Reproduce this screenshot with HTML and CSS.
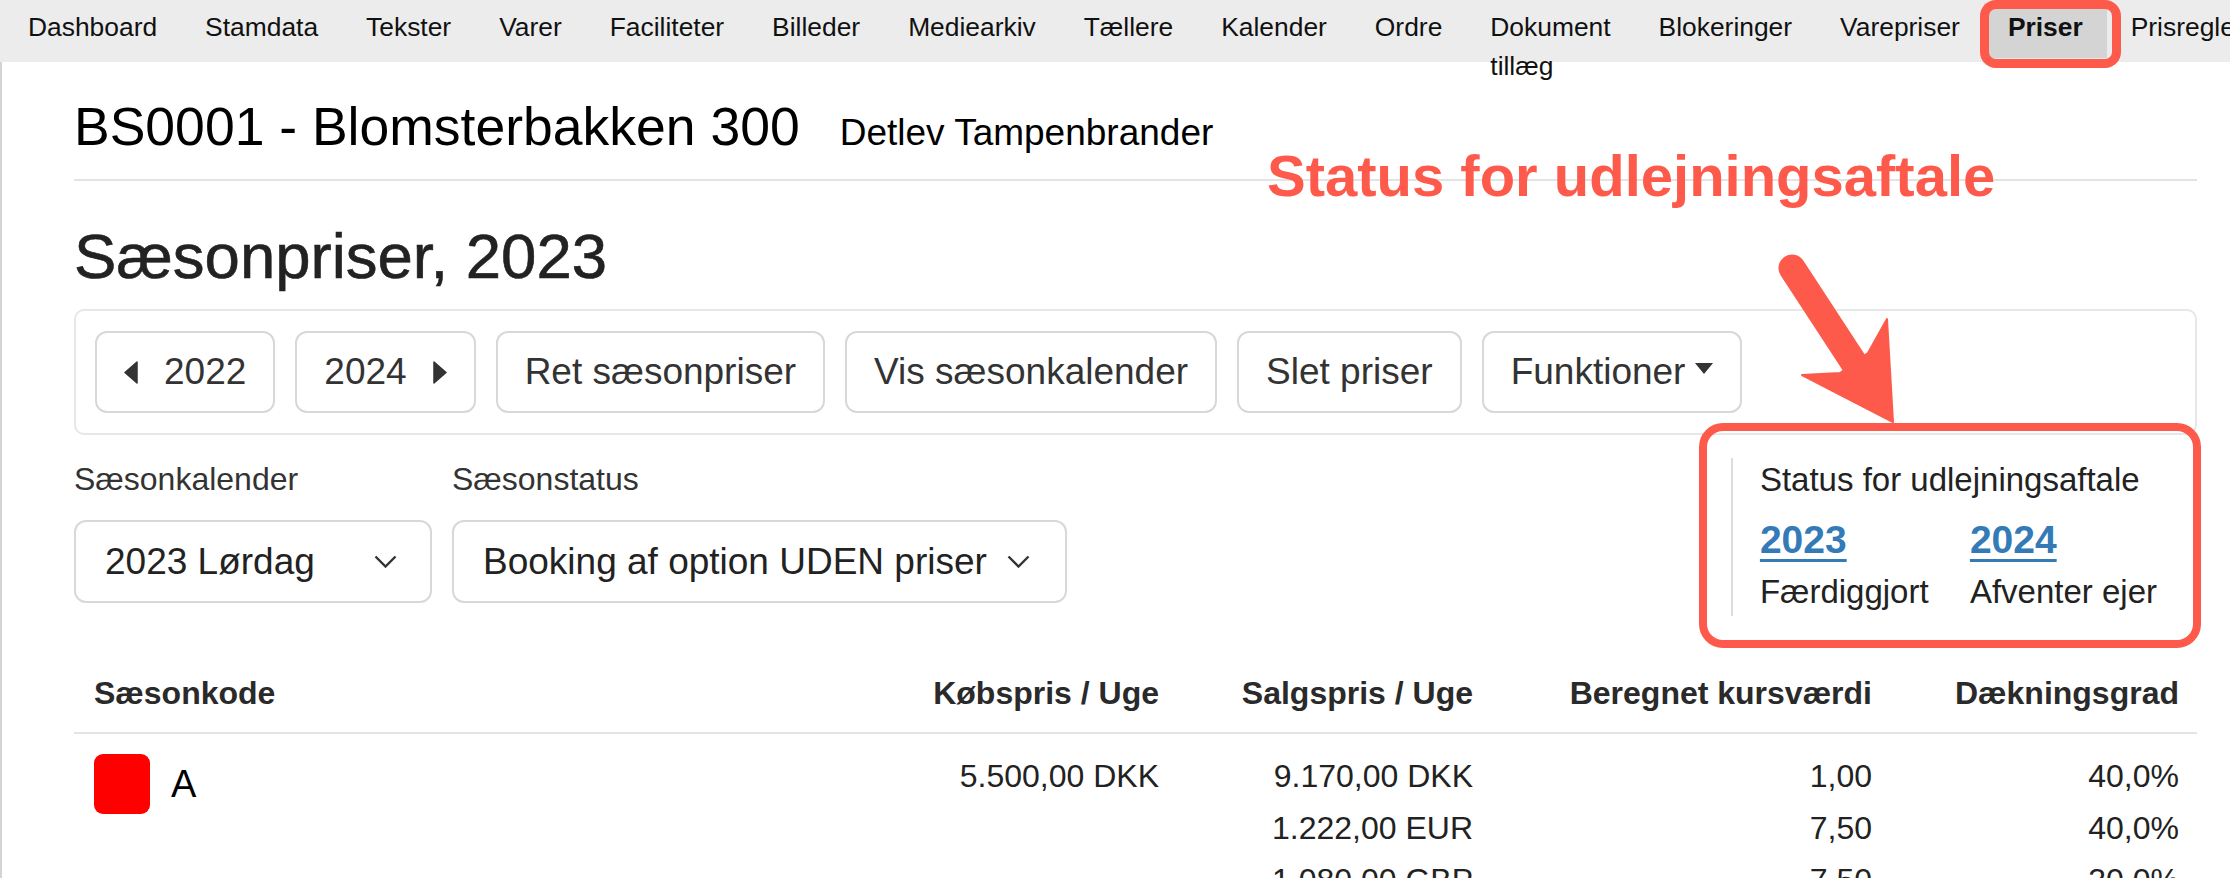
FILE: index.html
```html
<!DOCTYPE html>
<html lang="da">
<head>
    <meta charset="UTF-8">
    <meta name="viewport" content="width=device-width, initial-scale=1.0">
    <title>Sæsonpriser</title>
    <link rel="stylesheet" href="styles.css">
</head>
<body>
    <nav class="topnav">
        <a class="nav-item" href="#">Dashboard</a>
        <a class="nav-item" href="#">Stamdata</a>
        <a class="nav-item" href="#">Tekster</a>
        <a class="nav-item" href="#">Varer</a>
        <a class="nav-item" href="#">Faciliteter</a>
        <a class="nav-item" href="#">Billeder</a>
        <a class="nav-item" href="#">Mediearkiv</a>
        <a class="nav-item" href="#">Tællere</a>
        <a class="nav-item" href="#">Kalender</a>
        <a class="nav-item" href="#">Ordre</a>
        <a class="nav-item" href="#">Dokument<br>tillæg</a>
        <a class="nav-item" href="#">Blokeringer</a>
        <a class="nav-item" href="#">Varepriser</a>
        <a class="nav-item nav-item-active" href="#">Priser</a>
        <a class="nav-item" href="#">Prisregler</a>
    </nav>

    <div class="page">
        <div class="page-head">
            <h1>BS0001 - Blomsterbakken 300</h1>
            <span class="owner">Detlev Tampenbrander</span>
        </div>

        <h2>Sæsonpriser, 2023</h2>

        <div class="toolbar">
            <button type="button" class="btn">
                <svg width="14" height="23" viewBox="0 0 14 23"><path d="M13 1V22L1 11.5Z" fill="#333" stroke="#333" stroke-width="1.5" stroke-linejoin="round"/></svg>
                2022
            </button>
            <button type="button" class="btn">
                2024
                <svg width="14" height="23" viewBox="0 0 14 23"><path d="M1 1V22L13 11.5Z" fill="#333" stroke="#333" stroke-width="1.5" stroke-linejoin="round"/></svg>
            </button>
            <button type="button" class="btn">Ret sæsonpriser</button>
            <button type="button" class="btn">Vis sæsonkalender</button>
            <button type="button" class="btn">Slet priser</button>
            <button type="button" class="btn btn-dropdown">
                Funktioner
                <svg class="caret" width="18" height="11" viewBox="0 0 18 11"><path d="M0 0H18L9 11Z" fill="#333"/></svg>
            </button>
        </div>

        <div class="filters">
            <div class="field">
                <label>Sæsonkalender</label>
                <div class="select select-calendar">
                    <span>2023 Lørdag</span>
                    <svg width="23" height="13" viewBox="0 0 23 13"><path d="M1.5 1.5L11.5 11.5L21.5 1.5" fill="none" stroke="#333" stroke-width="2.4"/></svg>
                </div>
            </div>
            <div class="field">
                <label>Sæsonstatus</label>
                <div class="select">
                    <span>Booking af option UDEN priser</span>
                    <svg width="23" height="13" viewBox="0 0 23 13"><path d="M1.5 1.5L11.5 11.5L21.5 1.5" fill="none" stroke="#333" stroke-width="2.4"/></svg>
                </div>
            </div>

            <div class="status">
                <div class="status-title">Status for udlejningsaftale</div>
                <div class="status-grid">
                    <a class="status-year" href="#">2023</a>
                    <a class="status-year" href="#">2024</a>
                    <span>Færdiggjort</span>
                    <span>Afventer ejer</span>
                </div>
            </div>
        </div>

        <table class="prices">
            <colgroup>
                <col>
                <col class="col-buy">
                <col class="col-sell">
                <col class="col-rate">
                <col class="col-margin">
            </colgroup>
            <thead>
                <tr>
                    <th>Sæsonkode</th>
                    <th>Købspris / Uge</th>
                    <th>Salgspris / Uge</th>
                    <th>Beregnet kursværdi</th>
                    <th>Dækningsgrad</th>
                </tr>
            </thead>
            <tbody>
                <tr>
                    <td>
                        <div class="season">
                            <span class="season-color"></span>
                            <span class="season-code">A</span>
                        </div>
                    </td>
                    <td>5.500,00 DKK</td>
                    <td>
                        <div>9.170,00 DKK</div>
                        <div>1.222,00 EUR</div>
                        <div>1.080,00 GBP</div>
                    </td>
                    <td>
                        <div>1,00</div>
                        <div>7,50</div>
                        <div>7,50</div>
                    </td>
                    <td>
                        <div>40,0%</div>
                        <div>40,0%</div>
                        <div>30,0%</div>
                    </td>
                </tr>
            </tbody>
        </table>
    </div>

    <!-- annotation layer -->
    <div class="callout-text">Status for udlejningsaftale</div>
    <svg class="callout-arrow" width="140" height="190" viewBox="0 0 140 190">
        <line x1="22" y1="23" x2="88" y2="124" stroke="#fd5a4b" stroke-width="27" stroke-linecap="round"/>
        <path d="M123 177L117 74L98 108L70 128L32 130Z" fill="#fd5a4b" stroke="#fd5a4b" stroke-width="2" stroke-linejoin="round"/>
    </svg>
</body>
</html>
```

FILE: styles.css
```css
body {
    margin: 0;
    font-family: "Liberation Sans", Arial, sans-serif;
    color: #333;
    background-color: #fff;
    overflow: hidden;
}

/* top navigation */

.topnav {
    display: flex;
    align-items: flex-start;
    height: 62px;
    padding-left: 4px;
    background-color: #ececec;
    box-sizing: border-box;
}

.nav-item {
    flex-shrink: 0;
    padding: 8px 24px 0;
    font-size: 26.4px;
    line-height: 39px;
    color: #111;
    text-decoration: none;
    white-space: nowrap;
}

.nav-item-active {
    position: relative;
    height: 55px;
    margin-top: 3px;
    padding-top: 5px;
    box-sizing: border-box;
    background-color: #d4d4d4;
    font-weight: bold;
}

.nav-item-active::after {
    content: "";
    position: absolute;
    top: -3px;
    bottom: -10px;
    left: -4px;
    right: -14px;
    border: 9px solid #fd5a4b;
    border-radius: 16px;
}

/* page */

.page {
    padding: 33px 33px 0 72px;
    border-left: 2px solid #d4d4d4;
}

.page-head {
    display: flex;
    align-items: baseline;
    gap: 40px;
    padding-bottom: 20px;
    border-bottom: 2px solid #e3e3e3;
}

.page-head h1 {
    margin: 0;
    font-size: 53.5px;
    line-height: 64px;
    font-weight: normal;
    color: #000;
}

.owner {
    font-size: 37px;
    color: #000;
}

h2 {
    margin: 38px 0 16px;
    font-size: 63.5px;
    line-height: 74px;
    font-weight: normal;
    color: #222;
    -webkit-text-stroke: 0.6px #222;
}

/* toolbar */

.toolbar {
    display: flex;
    gap: 20px;
    padding: 20px 19px;
    border: 2px solid #e7e7e7;
    border-radius: 10px;
}

.btn {
    display: inline-flex;
    align-items: center;
    gap: 26px;
    height: 82px;
    padding: 0 27px;
    box-sizing: border-box;
    border: 2px solid #d8d8d8;
    border-radius: 12px;
    background-color: #fff;
    font-family: inherit;
    font-size: 37px;
    color: #333;
}

.btn-dropdown {
    gap: 10px;
}

.btn-dropdown .caret {
    margin-top: -8px;
}

/* filters + status */

.filters {
    display: flex;
    align-items: flex-start;
    gap: 20px;
    margin-top: 23px;
}

.field label {
    display: block;
    margin-bottom: 20px;
    font-size: 32px;
    line-height: 42px;
    color: #333;
}

.select {
    display: flex;
    align-items: center;
    gap: 20px;
    height: 83px;
    padding: 0 35px 0 29px;
    box-sizing: border-box;
    border: 2px solid #d8d8d8;
    border-radius: 12px;
    font-size: 37px;
    color: #222;
}

.select-calendar {
    width: 358px;
    justify-content: space-between;
    padding-right: 33px;
}

.status {
    position: relative;
    margin-left: auto;
    height: 158px;
    padding: 0 40px 0 27px;
    box-sizing: border-box;
    border-left: 2px solid #dddddd;
}

.status::after {
    content: "";
    position: absolute;
    top: -35px;
    bottom: -32px;
    left: -34px;
    right: -4px;
    border: 8px solid #fd5a4b;
    border-radius: 24px;
}

.status-title {
    margin-bottom: 16px;
    font-size: 33px;
    line-height: 44px;
    color: #222;
}

.status-grid {
    display: grid;
    grid-template-columns: 210px auto;
    row-gap: 8px;
    font-size: 33px;
    line-height: 44px;
    color: #222;
}

.status-year {
    font-size: 39px;
    font-weight: bold;
    color: #337ab7;
    text-decoration: underline;
    text-decoration-thickness: 3px;
    text-underline-offset: 6px;
}

/* price table */

.prices {
    width: 100%;
    margin-top: 38px;
    border-collapse: collapse;
    table-layout: fixed;
}

.col-buy { width: 360px; }
.col-sell { width: 314px; }
.col-rate { width: 399px; }
.col-margin { width: 307px; }

.prices th {
    padding: 20px 18px;
    border-bottom: 2px solid #e1e4e8;
    font-size: 32px;
    line-height: 38px;
    text-align: right;
    color: #2a2a2a;
}

.prices td {
    padding: 16px 18px;
    vertical-align: top;
    font-size: 32px;
    line-height: 52px;
    text-align: right;
    color: #222;
}

.prices th:first-child,
.prices td:first-child {
    padding-left: 20px;
    text-align: left;
}

.season {
    display: flex;
    align-items: center;
    gap: 21px;
    margin-top: 4px;
}

.season-color {
    width: 56px;
    height: 60px;
    border-radius: 9px;
    background-color: #ff0000;
}

.season-code {
    font-size: 38px;
    line-height: 60px;
    color: #000;
}

/* annotations drawn over the screenshot */

.callout-text {
    position: absolute;
    left: 1267px;
    top: 147px;
    font-size: 58px;
    line-height: 58px;
    font-weight: bold;
    color: #fd5a4b;
    white-space: nowrap;
}

.callout-arrow {
    position: absolute;
    left: 1770px;
    top: 245px;
}
```
